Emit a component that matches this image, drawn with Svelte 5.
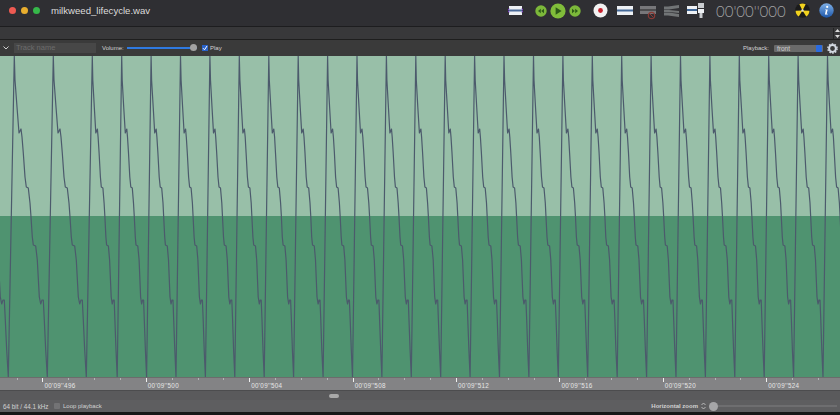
<script>
  const shape = [[0,56],[0.7,80],[2.7,107],[4.7,133],[5.7,131],[6.7,129],[7.7,137],[9,153],[10.7,177],[12,187],[14,188],[15.7,203],[16.7,217],[18,237],[19,245],[21.4,246],[23,260],[25,297],[26.4,304],[27.7,300],[29,300],[30,320],[31.4,350],[33,377]];
  const peaks = [-24.7, 14.3, 53.3, 92.3];
  while (peaks[peaks.length - 1] < 860) peaks.push(peaks[peaks.length - 1] + 29.41);
  let d = '';
  for (let i = 0; i < peaks.length - 1; i++) {
    const k = (peaks[i + 1] - peaks[i]) / 39;
    for (const [x, y] of shape) d += `${d ? 'L' : 'M'}${(peaks[i] + x * k).toFixed(1)} ${y} `;
  }
  const labels = ['', "00'09''496", "00'09''500", "00'09''504", "00'09''508", "00'09''512", "00'09''516", "00'09''520", "00'09''524"];
</script>

<div class="window">
  <header class="titlebar">
    <span class="light red"></span><span class="light yellow"></span><span class="light green"></span>
    <h1>milkweed_lifecycle.wav</h1>
    <svg class="ic stack" width="15" height="9" viewBox="0 0 15 9"><rect x="1" width="13" height="9" fill="#eef1f5"/><rect x="1" y="3.5" width="13" height="2" fill="#4a6a9a"/><path d="M1 2.5 0 4.5 1 6.5M14 2.5 15 4.5 14 6.5" stroke="#7a3fc0" fill="none"/></svg>
    <svg class="ic rw" width="12" height="12" viewBox="0 0 12 12"><circle cx="6" cy="6" r="5.7" fill="#7cb83a"/><path d="M5.8 3.8 3 6l2.8 2.2zM9 3.8 6.2 6 9 8.2z" fill="#2d5a18"/></svg>
    <svg class="ic pl" width="16" height="16" viewBox="0 0 16 16"><circle cx="8" cy="8" r="7.6" fill="#80bd3a"/><path d="M5.6 4.2 11.6 8l-6 3.8z" fill="#2d5a18"/></svg>
    <svg class="ic ff" width="12" height="12" viewBox="0 0 12 12"><circle cx="6" cy="6" r="5.7" fill="#7cb83a"/><path d="M3 3.8 5.8 6 3 8.2zM6.2 3.8 9 6 6.2 8.2z" fill="#2d5a18"/></svg>
    <svg class="ic rec" width="15" height="15" viewBox="0 0 15 15"><circle cx="7.5" cy="7.5" r="7" fill="#f2f2f2"/><circle cx="7.5" cy="7.5" r="2.4" fill="#c8202c"/></svg>
    <svg class="ic b1" width="16" height="9" viewBox="0 0 16 9"><rect width="16" height="9" fill="#eef1f5"/><rect y="3.5" width="16" height="2" fill="#456a9a"/></svg>
    <svg class="ic b2" width="17" height="14" viewBox="0 0 17 14"><rect width="16" height="8" fill="#77777a"/><rect y="3" width="16" height="2" fill="#4c4c4e"/><circle cx="11.5" cy="9.5" r="3.2" fill="none" stroke="#8a3a35" stroke-width="1.2"/><path d="M9.5 7.5l4 4" stroke="#8a3a35"/></svg>
    <svg class="ic b3" width="15" height="12" viewBox="0 0 15 12"><path d="M0 1.5h4L15 0v3L5 4.5H0zM0 5h5l10 1v2L5 7H0zM0 7.5h5L15 9v3L4 10.5H0z" fill="#717476"/></svg>
    <svg class="ic b4" width="17" height="15" viewBox="0 0 17 15"><rect y="3" width="10" height="8" fill="#eef1f5"/><rect y="6" width="10" height="2" fill="#3f6798"/><rect x="11" width="6" height="5" fill="#c9ccd0"/><rect x="11" y="6" width="6" height="4" fill="#eef1f5"/><rect x="12.5" y="10" width="3" height="5" fill="#c9ccd0"/></svg>
    <span class="clock">00'00''000</span>
    <svg class="ic rad" width="15" height="15" viewBox="0 0 16 16"><circle cx="8" cy="8" r="7.8" fill="#1a1a1a"/><path d="M8 8 4.6 1.4a7.4 7.4 0 0 1 6.8 0zM8 8l7.4.2a7.4 7.4 0 0 1-3.4 6.2zM8 8 4 14.4A7.4 7.4 0 0 1 .6 8.2z" fill="#f2d21e"/><circle cx="8" cy="8" r="1.3" fill="#e8e4c8"/></svg>
    <svg class="ic inf" width="15" height="15" viewBox="0 0 15 15"><defs><linearGradient id="ig" x1="0" y1="0" x2="0" y2="1"><stop offset="0" stop-color="#7fb0e8"/><stop offset="1" stop-color="#1c56a8"/></linearGradient></defs><circle cx="7.5" cy="7.5" r="7.2" fill="url(#ig)"/><circle cx="8.2" cy="3.9" r="1.1" fill="#fff"/><path d="M6.3 6.4h2.4l-1 4.4h1v.8H5.9l1-4.5h-.8z" fill="#fff"/></svg>
  </header>

  <div class="subbar">
    <svg class="stepper" width="5" height="9" viewBox="0 0 5 9"><path d="M2.5 0 5 3H0zM2.5 9 0 6h5z" fill="#d8d8d8"/></svg>
  </div>

  <div class="trackbar">
    <svg class="chev" width="6" height="4" viewBox="0 0 6 4"><path d="M.5.5 3 3 5.5.5" fill="none" stroke="#d0d0d0"/></svg>
    <span class="trackname">Track name</span>
    <span class="lab vol">Volume:</span>
    <span class="slider"><span class="knob"></span></span>
    <span class="check"><svg width="6" height="6" viewBox="0 0 6 6"><path d="M1 3.2 2.5 4.8 5 1" fill="none" stroke="#fff"/></svg></span>
    <span class="lab">Play</span>
    <span class="lab pb">Playback:</span>
    <span class="select">front<span class="selarrow"></span></span>
    <svg class="gear" width="11" height="11" viewBox="0 0 11 11"><circle cx="5.5" cy="5.5" r="3.4" fill="none" stroke="#d4dae2" stroke-width="2"/><circle cx="5.5" cy="5.5" r="4.6" fill="none" stroke="#d4dae2" stroke-width="1.4" stroke-dasharray="1.6 1.3"/></svg>
  </div>

  <main class="wave">
    <div class="upper"></div>
    <div class="lower"></div>
    <svg class="trace" width="840" height="321" viewBox="0 56 840 321"><path {d} fill="none" stroke="#4c5a6c" stroke-width="1.2" stroke-linejoin="round"/></svg>
  </main>

  <div class="ruler">
    {#each labels as label}
      <div class="cell">
        <div class="ticks"><i class="major"></i><i></i><i></i><i></i></div>
        <span>{label}</span>
      </div>
    {/each}
  </div>

  <div class="scroller"><span class="thumb"></span></div>

  <footer class="status">
    <span class="lab info">64 bit / 44.1 kHz</span>
    <span class="box"></span>
    <span class="lab">Loop playback</span>
    <span class="lab hz">Horizontal zoom</span>
    <svg class="updown" width="5" height="8" viewBox="0 0 5 8"><path d="M.5 3 2.5 1l2 2M.5 5l2 2 2-2" fill="none" stroke="#cfcfcf" stroke-width=".8"/></svg>
    <span class="zoomtrack"><span class="zoomknob"></span></span>
  </footer>
  <div class="below"></div>
</div>

<style>
  :global(body) { margin: 0; background: #111; }
  .window { width: 840px; height: 415px; overflow: hidden; display: flex; flex-direction: column; font-family: "Liberation Sans", Arial, sans-serif; }
  .titlebar { height: 27px; flex: none; box-sizing: border-box; display: flex; align-items: center; padding-left: 9px; background: #2f2f33; border-bottom: 1px solid #1d1d1f; padding-bottom: 5px; }
  .light { width: 7px; height: 7px; border-radius: 50%; margin-right: 5px; flex: none; }
  .red { background: #ee5a52; }
  .yellow { background: #e9ae2e; }
  .green { background: #36b84a; margin-right: 0; }
  h1 { margin: 0 0 0 11px; width: 100px; flex: none; font-size: 9.6px; font-weight: 400; color: #dcdcdc; white-space: nowrap; }
  .ic { flex: none; display: block; }
  .stack { margin-left: 357px; }
  .rw { margin-left: 12px; }
  .pl { margin-left: 3px; }
  .ff { margin-left: 2.5px; }
  .rec { margin-left: 12px; }
  .b1 { margin-left: 9.5px; }
  .b2 { margin-left: 7px; margin-top: 5px; }
  .b3 { margin-left: 7px; }
  .b4 { margin-left: 8px; }
  .clock { margin-left: 12px; width: 71px; flex: none; font-size: 15px; color: #a4a4a6; white-space: nowrap; font-family: Lato, "Liberation Sans", sans-serif; font-weight: 300; }
  .rad { margin-left: 7.5px; }
  .inf { margin-left: 9px; }

  .subbar { height: 13px; flex: none; box-sizing: border-box; background: #38383a; border-bottom: 1px solid #1e1e1e; display: flex; justify-content: flex-end; align-items: center; }
  .stepper { border-left: 1px solid #242424; padding: 1px 0 1px 1px; }

  .trackbar { height: 16px; flex: none; display: flex; align-items: center; background: #3a3a3a; }
  .chev { margin-left: 3px; flex: none; }
  .trackname { margin-left: 5px; width: 82px; height: 10px; line-height: 10px; flex: none; box-sizing: border-box; padding-left: 2px; background: #474747; font-size: 7.5px; color: #6c6c6c; }
  .lab { font-size: 6px; color: #d2d2d2; white-space: nowrap; flex: none; }
  .vol { margin-left: 6px; width: 20px; }
  .slider { margin-left: 5px; width: 70px; height: 1.5px; background: #2f7ae0; position: relative; flex: none; }
  .knob { position: absolute; right: 0; top: -3px; width: 7px; height: 7px; border-radius: 50%; background: #a2a2a2; }
  .check { margin-left: 5px; margin-right: 2px; width: 6px; height: 6px; background: #2a62c8; flex: none; display: flex; }
  .pb { margin-left: auto; }
  .select { margin-left: 5px; width: 49px; height: 7px; line-height: 7px; flex: none; box-sizing: border-box; padding-left: 3px; background: #6a6a6a; color: #cfcfcf; font-size: 6.5px; border-radius: 1px; position: relative; }
  .selarrow { position: absolute; right: 1px; top: 0; width: 6px; height: 7px; background: #2a6be0; border-radius: 1px; }
  .gear { margin-left: 4px; margin-right: 2px; flex: none; }

  .wave { height: 321px; flex: none; position: relative; display: flex; flex-direction: column; }
  .upper { flex: 160 0 0; background: #98bfa8; }
  .lower { flex: 161 0 0; background: #4f9370; }
  .trace { position: absolute; inset: 0; display: block; }

  .ruler { height: 13px; flex: none; display: flex; margin-left: -61px; width: 1000px; background: #838385; border-top: 1px solid #6c6c6c; box-sizing: border-box; }
  .cell { width: 103.42px; flex: none; font-size: 6.3px; color: #e6e6e6; white-space: nowrap; }
  .cell span { display: block; padding-left: 2px; margin-top: 1px; letter-spacing: .3px; line-height: 8px; }
  .ticks { display: flex; height: 3px; }
  .ticks i { flex: 1; box-sizing: border-box; border-left: 1px solid #b4b4b6; height: 2px; }
  .ticks i.major { border-left-color: #f0f0f0; height: 4px; }

  .scroller { height: 10px; flex: none; background: #5a5a5c; border-top: 1px solid #4c4c4e; box-sizing: border-box; display: flex; align-items: center; padding-left: 329px; }
  .thumb { width: 10px; height: 4px; border-radius: 2px; background: #a8a8a8; }

  .status { height: 12px; flex: none; display: flex; align-items: center; background: #5e5e60; padding-left: 3px; box-sizing: border-box; }
  .info { width: 49px; font-size: 6.3px; }
  .box { margin-left: 2px; margin-right: 3px; width: 6px; height: 6px; background: #737375; border-radius: 1px; flex: none; }
  .hz { margin-left: auto; font-weight: 700; }
  .updown { margin-left: 2.5px; flex: none; }
  .zoomtrack { margin-left: 3px; margin-right: 3.5px; width: 128px; height: 1.5px; background: #6e6e70; position: relative; flex: none; }
  .zoomknob { position: absolute; left: 0; top: -3.5px; width: 9px; height: 9px; border-radius: 50%; background: #a6a6a8; }
  .below { flex: 1; background: #161616; }
</style>
